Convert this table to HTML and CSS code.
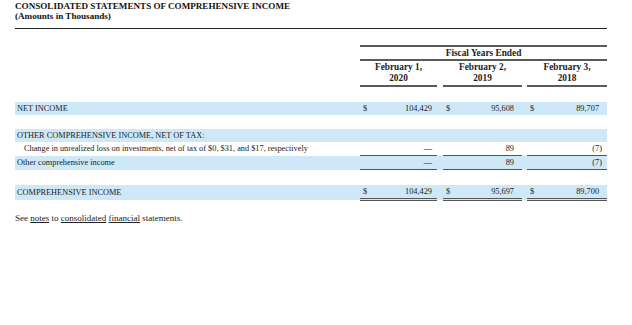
FILE: index.html
```html
<!DOCTYPE html>
<html>
<head>
<meta charset="utf-8">
<link rel="stylesheet" href="styles.css">
</head>
<body>
<div class="page">
  <div class="title">
    <div>CONSOLIDATED STATEMENTS OF COMPREHENSIVE INCOME</div>
    <div>(Amounts in Thousands)</div>
  </div>
  <table class="fin">
    <colgroup>
      <col class="c-label"><col class="c1"><col class="cg1"><col class="c2"><col class="cg2"><col class="c3">
    </colgroup>
    <thead>
      <tr class="h1">
        <th></th>
        <th colspan="5" class="span">Fiscal Years Ended</th>
      </tr>
      <tr class="h2">
        <th></th>
        <th class="yr">February 1,<br>2020</th>
        <th class="gap"></th>
        <th class="yr">February 2,<br>2019</th>
        <th class="gap"></th>
        <th class="yr">February 3,<br>2018</th>
      </tr>
    </thead>
    <tbody>
      <tr class="sp1"><td colspan="6"></td></tr>
      <tr class="band">
        <td class="lbl">NET INCOME</td>
        <td class="num n1"><div class="cell"><span>$</span><span>104,429</span></div></td>
        <td></td>
        <td class="num n2"><div class="cell"><span>$</span><span>95,608</span></div></td>
        <td></td>
        <td class="num n3"><div class="cell"><span>$</span><span>89,707</span></div></td>
      </tr>
      <tr class="sp"><td colspan="6"></td></tr>
      <tr class="band">
        <td class="lbl">OTHER COMPREHENSIVE INCOME, NET OF TAX:</td>
        <td></td><td></td><td></td><td></td><td></td>
      </tr>
      <tr>
        <td class="lbl ind">Change in unrealized loss on investments, net of tax of $0, $31, and $17, respectively</td>
        <td class="num n1 ul"><div class="cell end"><span>—</span></div></td>
        <td></td>
        <td class="num n2 ul"><div class="cell end"><span>89</span></div></td>
        <td></td>
        <td class="num n3 ul"><div class="cell end"><span class="par">(7)</span></div></td>
      </tr>
      <tr class="band">
        <td class="lbl">Other comprehensive income</td>
        <td class="num n1 ul"><div class="cell end"><span>—</span></div></td>
        <td></td>
        <td class="num n2 ul"><div class="cell end"><span>89</span></div></td>
        <td></td>
        <td class="num n3 ul"><div class="cell end"><span class="par">(7)</span></div></td>
      </tr>
      <tr class="sp2"><td colspan="6"></td></tr>
      <tr class="band">
        <td class="lbl">COMPREHENSIVE INCOME</td>
        <td class="num n1 dbl"><div class="cell"><span>$</span><span>104,429</span></div></td>
        <td></td>
        <td class="num n2 dbl"><div class="cell"><span>$</span><span>95,697</span></div></td>
        <td></td>
        <td class="num n3 dbl"><div class="cell"><span>$</span><span>89,700</span></div></td>
      </tr>
    </tbody>
  </table>
  <p class="note">See <span class="u">notes</span> to <span class="u">consolidated</span> <span class="u">financial</span> statements.</p>
</div>
</body>
</html>
```

FILE: styles.css
```css
html, body {
  margin: 0;
  padding: 0;
  background: #ffffff;
}

body {
  font-family: "Liberation Serif", "Times New Roman", serif;
  color: #222;
}

.page {
  width: 592px;
  padding-left: 15px;
}

.title {
  font-weight: bold;
  font-size: 9.1px;
  line-height: 10px;
  padding-top: 1px;
  padding-bottom: 7px;
  border-bottom: 1px solid #222;
  color: #111;
}

.fin {
  width: 592px;
  border-collapse: collapse;
  table-layout: fixed;
  margin-top: 16px;
  font-size: 8.3px;
}

.c-label { width: 345px; }
.c1 { width: 77px; }
.cg1 { width: 6px; }
.c2 { width: 79px; }
.cg2 { width: 5px; }
.c3 { width: 80px; }

.fin th, .fin td {
  padding: 0;
}

.h1 .span {
  border-top: 2px solid #5a5a5a;
  border-bottom: 2px solid #5a5a5a;
  height: 12px;
  font-weight: bold;
  font-size: 9.3px;
  text-align: center;
  line-height: 11px;
  vertical-align: middle;
}

.h2 th {
  font-weight: bold;
  font-size: 9.3px;
  text-align: center;
  line-height: 11px;
  padding-top: 1px;
  height: 23px;
  vertical-align: top;
}

.h2 .yr {
  border-bottom: 2px solid #5a5a5a;
}

.fin tbody tr td {
  height: 13px;
  line-height: 13px;
  vertical-align: middle;
}

.fin tbody tr.sp1 td { height: 15px; }
.fin tbody tr.sp td { height: 14px; }
.fin tbody tr.sp2 td { height: 15px; }

.band td {
  background: #cfe8f7;
}

.lbl {
  padding-left: 2px !important;
  white-space: nowrap;
}

.ind {
  padding-left: 9px !important;
}

.cell {
  display: flex;
  justify-content: space-between;
  padding-left: 3px;
}

.cell.end {
  justify-content: flex-end;
}

.n1 .cell { padding-right: 5px; }
.n2 .cell { padding-right: 8px; }
.n3 .cell { padding-right: 8px; }

.n3 .cell .par {
  margin-right: -3px;
}

.ul {
  border-bottom: 1px solid #555;
}

.dbl {
  border-bottom: 3px double #555;
}

.note {
  margin: 11px 0 0 0;
  font-size: 9px;
  line-height: 12px;
}

.note .u {
  text-decoration: underline;
  text-decoration-thickness: 1px;
}
```
